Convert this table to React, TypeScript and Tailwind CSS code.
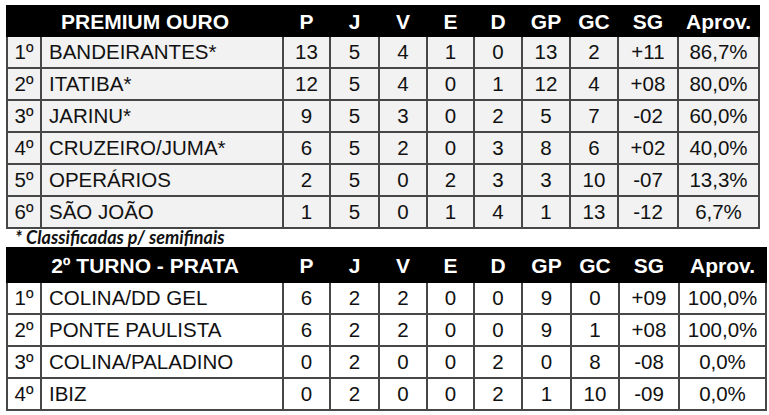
import React from 'react';

type Row = (string | number)[];

const OURO: Row[] = [
  ['1º', 'BANDEIRANTES*', 13, 5, 4, 1, 0, 13, 2, '+11', '86,7%'],
  ['2º', 'ITATIBA*', 12, 5, 4, 0, 1, 12, 4, '+08', '80,0%'],
  ['3º', 'JARINU*', 9, 5, 3, 0, 2, 5, 7, '-02', '60,0%'],
  ['4º', 'CRUZEIRO/JUMA*', 6, 5, 2, 0, 3, 8, 6, '+02', '40,0%'],
  ['5º', 'OPERÁRIOS', 2, 5, 0, 2, 3, 3, 10, '-07', '13,3%'],
  ['6º', 'SÃO JOÃO', 1, 5, 0, 1, 4, 1, 13, '-12', '6,7%'],
];

const PRATA: Row[] = [
  ['1º', 'COLINA/DD GEL', 6, 2, 2, 0, 0, 9, 0, '+09', '100,0%'],
  ['2º', 'PONTE PAULISTA', 6, 2, 2, 0, 0, 9, 1, '+08', '100,0%'],
  ['3º', 'COLINA/PALADINO', 0, 2, 0, 0, 2, 0, 8, '-08', '0,0%'],
  ['4º', 'IBIZ', 0, 2, 0, 0, 2, 1, 10, '-09', '0,0%'],
];

const COLS = ['P', 'J', 'V', 'E', 'D', 'GP', 'GC', 'SG', 'Aprov.'];

function Standings({
  title,
  rows,
  widths,
  rowBg,
  headH,
}: {
  title: string;
  rows: Row[];
  widths: number[];
  rowBg: string;
  headH: string;
}) {
  return (
    <table className="table-fixed border-collapse" style={{ width: widths.reduce((a, b) => a + b, 0) }}>
      <colgroup>
        {widths.map((w, i) => (
          <col key={i} style={{ width: w }} />
        ))}
      </colgroup>
      <thead>
        <tr className={`bg-black text-white ${headH} font-bold text-[21px] leading-none`}>
          <th colSpan={2} className="border-2 border-black text-center">{title}</th>
          {COLS.map(c => (
            <th key={c} className="border-2 border-black text-center">{c}</th>
          ))}
        </tr>
      </thead>
      <tbody>
        {rows.map((r, i) => (
          <tr key={i} className={`${rowBg} h-[32px] text-[20.5px] leading-none text-[#111]`}>
            {r.map((v, j) => (
              <td
                key={j}
                className={`border-2 border-[#474747] ${j === 1 ? 'text-left pl-[7px]' : 'text-center'}`}
              >
                {v}
              </td>
            ))}
          </tr>
        ))}
      </tbody>
    </table>
  );
}

export default function App() {
  return (
    <div
      className="w-[769px] h-[415px] bg-white pt-[5px] pl-[6px] overflow-hidden"
      style={{ fontFamily: '"Liberation Sans", Arial, sans-serif' }}
    >
      <Standings
        title="PREMIUM OURO"
        rows={OURO}
        widths={[34, 242, 47, 49, 48, 47, 48, 48, 48, 60, 81]}
        rowBg="bg-[#f2f2f2]"
        headH="h-[30px]"
      />
      <div
        className="h-[18px] pl-[9px] text-[18px] font-bold italic leading-[17px] text-[#111]"
        style={{ fontFamily: 'Lato, "Open Sans", sans-serif' }}
      >
        * Classificadas p/ semifinais
      </div>
      <Standings
        title="2º TURNO - PRATA"
        rows={PRATA}
        widths={[34, 242, 47, 49, 48, 47, 48, 49, 48, 60, 87]}
        rowBg="bg-white"
        headH="h-[34px]"
      />
    </div>
  );
}
